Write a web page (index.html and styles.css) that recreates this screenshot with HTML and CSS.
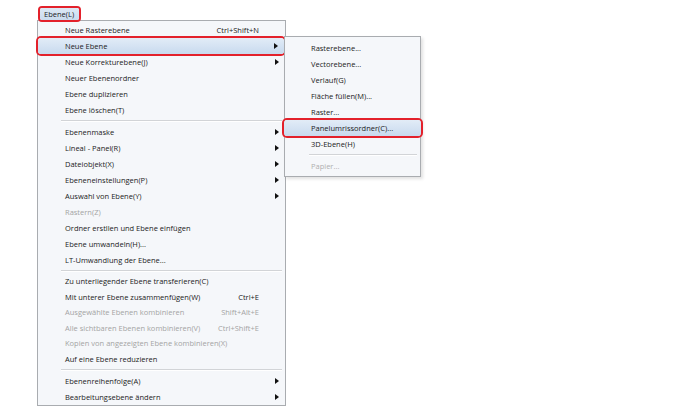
FILE: index.html
```html
<!DOCTYPE html>
<html lang="de">
<head>
<meta charset="UTF-8">
<meta name="viewport" content="width=device-width, initial-scale=1.0">
<title>Ebene Menü</title>
<link rel="stylesheet" href="styles.css">
</head>
<body>
<div class="menubar">
    <span class="menubar-item open">Ebene(L)</span>
</div>

<div class="menu main-menu">
    <div class="item"><span>Neue Rasterebene</span><span class="key">Ctrl+Shift+N</span></div>
    <div class="item sub marked hl">
        <span>Neue Ebene</span>
        <div class="menu submenu">
            <div class="item">Rasterebene...</div>
            <div class="item">Vectorebene...</div>
            <div class="item">Verlauf(G)</div>
            <div class="item">Fläche füllen(M)...</div>
            <div class="item">Raster...</div>
            <div class="item marked hl">Panelumrissordner(C)...</div>
            <div class="item">3D-Ebene(H)</div>
            <div class="sep"></div>
            <div class="item off">Papier...</div>
        </div>
    </div>
    <div class="item sub">Neue Korrekturebene(J)</div>
    <div class="item">Neuer Ebenenordner</div>
    <div class="item">Ebene duplizieren</div>
    <div class="item">Ebene löschen(T)</div>
    <div class="sep"></div>
    <div class="item sub">Ebenenmaske</div>
    <div class="item sub">Lineal - Panel(R)</div>
    <div class="item sub">Dateiobjekt(X)</div>
    <div class="item sub">Ebeneneinstellungen(P)</div>
    <div class="item sub">Auswahl von Ebene(Y)</div>
    <div class="item off">Rastern(Z)</div>
    <div class="item">Ordner erstllen und Ebene einfügen</div>
    <div class="item">Ebene umwandeln(H)...</div>
    <div class="item">LT-Umwandlung der Ebene...</div>
    <div class="sep"></div>
    <div class="group tight">
        <div class="item">Zu unterliegender Ebene transferieren(C)</div>
        <div class="item"><span>Mit unterer Ebene zusammenfügen(W)</span><span class="key">Ctrl+E</span></div>
        <div class="item off"><span>Ausgewählte Ebenen kombinieren</span><span class="key">Shift+Alt+E</span></div>
        <div class="item off"><span>Alle sichtbaren Ebenen kombinieren(V)</span><span class="key">Ctrl+Shift+E</span></div>
        <div class="item off">Kopien von angezeigten Ebene kombinieren(X)</div>
        <div class="item">Auf eine Ebene reduzieren</div>
    </div>
    <div class="sep"></div>
    <div class="item sub">Ebenenreihenfolge(A)</div>
    <div class="item sub">Bearbeitungsebene ändern</div>
</div>
</body>
</html>
```

FILE: styles.css
```css
body {
    margin: 0;
    padding: 8px 0 0 37px;
    background-color: #fff;
    font-family: "Open Sans", "Noto Sans", sans-serif;
    font-size: 7.5px;
    color: #1b1b1b;
}

.menubar {
    display: flex;
    position: relative;
    z-index: 2;
    height: 12px;
}

.menubar-item {
    margin-left: 3px;
    padding: 0 5px 0 4px;
    line-height: 12px;
    height: 12px;
    background: linear-gradient(#dde9f5, #c9dbee);
    border-radius: 2px;
    box-shadow: 0 0 0 2px #e3212b;
}

.menu {
    background-color: #f5f7fa;
    border: 1px solid #a9acb0;
}

.main-menu {
    position: relative;
    width: 247px;
    padding: 1px 0 0;
}

.item {
    position: relative;
    display: flex;
    justify-content: space-between;
    height: 16px;
    line-height: 16px;
    padding: 0 26px 0 27px;
    white-space: nowrap;
}

.group.tight .item {
    height: 15.5px;
    line-height: 15.5px;
}

.item.off {
    color: #a4a4a4;
}

.item.sub::after {
    content: "";
    position: absolute;
    right: 6px;
    top: 5px;
    border-left: 4px solid #111;
    border-top: 3.5px solid transparent;
    border-bottom: 3.5px solid transparent;
}

.item.hl {
    background: linear-gradient(#e2ecf7, #c8daee);
}

.item.marked {
    margin: 0 2px;
    padding-left: 25px;
    border-radius: 3px;
    box-shadow: 0 0 0 2px #e3212b;
}

.main-menu > .item.marked {
    margin: 0 1px 0 0;
    padding-left: 27px;
}

.sep {
    height: 6px;
    margin-left: 23px;
    margin-right: 3px;
    background: linear-gradient(transparent 2px, #d2d4d7 2px, #d2d4d7 3px, #fff 3px, #fff 4px, transparent 4px);
}

.submenu {
    position: absolute;
    left: 246px;
    top: -2px;
    width: 135px;
    padding: 3px 0 2px;
    color: #1b1b1b;
    box-shadow: 2px 2px 3px rgba(0, 0, 0, 0.12);
}

.submenu .item {
    padding-left: 26px;
    padding-right: 6px;
    justify-content: flex-start;
}

.submenu .item.marked {
    margin: 0 -1px;
    padding-left: 27px;
}

.submenu .item.off {
    color: #b0b0b0;
}

.submenu .sep {
    margin-left: 24px;
}
```
